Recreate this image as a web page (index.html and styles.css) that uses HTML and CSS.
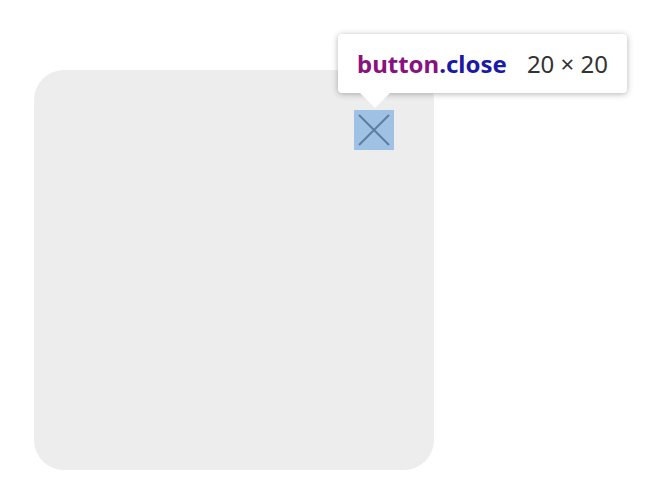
FILE: index.html
```html
<!DOCTYPE html>
<html>
<head>
<meta charset="utf-8">
<link rel="stylesheet" href="styles.css">
</head>
<body>
<div class="stage">
  <div class="panel">
    <button class="close" aria-label="Close">
      <svg width="40" height="40" viewBox="0 0 40 40"><path d="M5 5 L35 35 M35 5 L5 35" stroke="#5b7ea3" stroke-width="2" fill="none"/></svg>
    </button>
  </div>
  <div class="tip">
    <span class="tag">button</span><span class="cls">.close</span><span class="dims">20 × 20</span>
    <div class="arrow"></div>
  </div>
</div>
</body>
</html>
```
FILE: styles.css
```css
html, body { margin: 0; padding: 0; background: #fff; }
.stage { position: relative; width: 654px; height: 501px; padding: 70px 0 0 34px; box-sizing: border-box; }
.panel {
  width: 400px; height: 400px; background: #ededed; border-radius: 30px;
  display: flex; justify-content: flex-end; align-items: flex-start;
  padding: 40px; box-sizing: border-box;
}
.close {
  width: 40px; height: 40px; padding: 0; margin: 0; border: 0;
  background: #9fc1e3; display: block;
}
.close svg { display: block; }
.tip {
  position: absolute; left: 338px; top: 34px; width: 289px; height: 59px;
  box-sizing: border-box; background: #fff; border-radius: 4px;
  box-shadow: 0 1px 6px rgba(0,0,0,0.3);
  display: flex; align-items: center; padding: 1px 19px 0;
  font-family: "Noto Sans", "Open Sans", sans-serif; font-size: 24px; line-height: 1;
}
.tag { color: #881280; font-weight: 700; }
.cls { color: #1a1aa6; font-weight: 700; }
.dims { color: #333; margin-left: auto; font-weight: 400; }
.arrow {
  position: absolute; left: 22px; top: 59px; width: 0; height: 0;
  border-left: 15px solid transparent; border-right: 15px solid transparent;
  border-top: 15px solid #fff;
}
```
